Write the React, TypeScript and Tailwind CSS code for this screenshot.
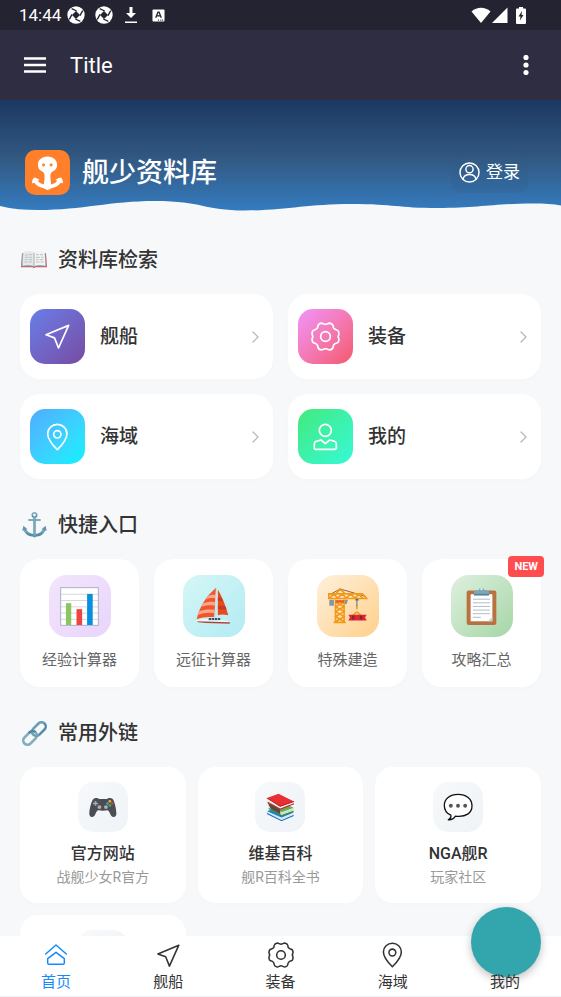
import type { ReactNode } from 'react';

type IconProps = { className?: string };

const line = {
  fill: 'none',
  stroke: 'currentColor',
  strokeLinecap: 'round' as const,
  strokeLinejoin: 'round' as const,
  'aria-hidden': true,
};

function PlaneIcon({ className }: IconProps) {
  return (
    <svg viewBox="0 0 80 80" strokeWidth="5" {...line} className={className}>
      <path d="M73 7 6 35l25 9 12 30Z" />
    </svg>
  );
}

function GearIcon({ className }: IconProps) {
  return (
    <svg viewBox="0 0 84 84" strokeWidth="5" {...line} className={className}>
      <path d="M42 7c-4 0-7-3-12-4-5 1-9 4-10 8 0 4-1 7-4 9-3 3-8 2-11 6-2 4-2 9-1 12 2 3 2 5 0 8-1 3-1 8 1 12 3 4 8 3 11 6 3 2 4 5 4 9 1 4 5 7 10 8 5-1 8-4 12-4s7 3 12 4c5-1 9-4 10-8 0-4 1-7 4-9 3-3 8-2 11-6 2-4 2-9 1-12-2-3-2-5 0-8 1-3 1-8-1-12-3-4-8-3-11-6-3-2-4-5-4-9-1-4-5-7-10-8-5 1-8 4-12 4Z" />
      <circle cx="42" cy="42" r="14" />
    </svg>
  );
}

function PinIcon({ className }: IconProps) {
  return (
    <svg viewBox="0 0 80 84" strokeWidth="5" {...line} className={className}>
      <path d="M40 80C29 69 11 49 11 32a29 28 0 0 1 58 0c0 17-18 37-29 48Z" />
      <circle cx="40" cy="34" r="11" />
    </svg>
  );
}

function PersonIcon({ className }: IconProps) {
  return (
    <svg viewBox="0 0 80 84" strokeWidth="5" {...line} className={className}>
      <circle cx="40" cy="22" r="18" />
      <path d="m27 51-15 4c-4 1-5 4-5 8v13c0 2 1 3 3 3h60c2 0 3-1 3-3V63c0-4-1-7-5-8l-15-4-13 11Z" />
    </svg>
  );
}

function HomeIcon({ className }: IconProps) {
  return (
    <svg viewBox="0 0 72 72" strokeWidth="4.5" {...line} className={className}>
      <path d="M5 33 36 6l31 27" />
      <path d="M36 28 11 47v13c0 3 1 4 4 4h42c3 0 4-1 4-4V47Z" />
    </svg>
  );
}

function UserCircleIcon({ className }: IconProps) {
  return (
    <svg viewBox="0 0 64 64" strokeWidth="4.5" {...line} className={className}>
      <circle cx="32" cy="32" r="29" />
      <circle cx="32" cy="22" r="11" />
      <path d="M12 52c3-11 11-14 20-14s17 3 20 14" />
    </svg>
  );
}

function ChevronIcon({ className }: IconProps) {
  return (
    <svg viewBox="0 0 8 14" strokeWidth="1.2" {...line} className={className}>
      <path d="m1 2 5 5-5 5" />
    </svg>
  );
}

function ApertureIcon() {
  return (
    <svg viewBox="0 0 54 54" className="size-[18px]" aria-hidden>
      <circle cx="27" cy="27" r="26" fill="#fff" />
      <path d="m27 15 12 12-12 12-12-12Z" fill="#242331" />
      <path d="M29 15 14 8M39 29l8-15M25 39l15 7M15 25 7 40" stroke="#242331" strokeWidth="4" />
    </svg>
  );
}

function BookEmoji() {
  return (
    <svg viewBox="0 0 78 52" className="w-[26px]" aria-hidden>
      <path d="M3 7h72l3 42H43l-4 3-4-3H0Z" fill="#c9555a" />
      <path d="M4 6h69l2 40H42l-3 2-3-2H2Z" fill="#8fb3c4" />
      <path d="M7 3c12-4 24-4 32 2v41c-9-5-22-5-34-2Z" fill="#e6e9ea" />
      <path d="M71 3C59-1 47-1 39 5v41c9-5 22-5 34-2Z" fill="#f2f3f3" />
      <path d="M39 5v41" stroke="#a4adb2" strokeWidth="3" />
      <path d="M12 12h8m3-1h10M11 19h12m2 0h8M11 26h8m3 0h11M10 33h11m3 0h9M45 11h9m3 0h9M45 19h12m3 0h7M45 26h8m3 0h11M45 33h11m3 0h9" stroke="#b9c0c3" strokeWidth="3" />
    </svg>
  );
}

function AnchorEmoji() {
  return (
    <svg viewBox="0 0 74 76" className="w-[25px]" aria-hidden>
      <defs>
        <linearGradient id="anchor-steel" x1="0" y1="0" x2="0" y2="1">
          <stop stopColor="#8fb2c0" />
          <stop offset="1" stopColor="#4c8ba8" />
        </linearGradient>
      </defs>
      <g fill="none" stroke="url(#anchor-steel)" strokeWidth="5">
        <circle cx="37" cy="9" r="6.5" />
        <path d="M7 47c3 14 14 22 30 22s27-8 30-22" strokeWidth="8" />
      </g>
      <path d="M21 24h32" stroke="#83aab8" strokeWidth="6" strokeLinecap="round" />
      <path d="M33 16h8v55h-8Z" fill="#7aa7b8" />
      <path d="M1 56 4 41l12 10ZM73 56 70 41 58 51ZM28 69l9 7 9-7Z" fill="#5f97af" />
    </svg>
  );
}

function LinkEmoji() {
  return (
    <svg viewBox="0 0 76 76" className="w-[25px]" aria-hidden>
      <g fill="none" strokeWidth="8" transform="rotate(-45 38 38)">
        <rect x="-5" y="25" width="48" height="26" rx="13" stroke="#82aebd" />
        <rect x="33" y="25" width="48" height="26" rx="13" stroke="#6d9fb3" />
        <path d="M26 25h5a12 12 0 0 1 12 12" stroke="#4d8ca3" />
        <path d="M45 51h23a13 13 0 0 0 13-13" stroke="#4b87a1" strokeWidth="4" />
      </g>
    </svg>
  );
}

function ChartEmoji() {
  return (
    <svg viewBox="0 0 118 118" className="w-[39px]" aria-hidden>
      <rect x="2" y="2" width="114" height="114" fill="#fff" stroke="#a9b0c3" strokeWidth="3" />
      <path d="M3 22h112M3 41h112M3 60h112M3 79h112M3 98h112" stroke="#bfc4cc" strokeWidth="2" />
      <path d="M18 49h16v66H18Z" fill="#8bc660" />
      <path d="M50 67h17v48H50Z" fill="#ee4540" />
      <path d="M82 21h17v94H82Z" fill="#078fe0" />
    </svg>
  );
}

function SailboatEmoji() {
  return (
    <svg viewBox="588 258 104 112" className="w-[35px]" aria-hidden>
      <path d="M648 260c-29 24-49 55-58 94 18-7 37-8 52-6Z" fill="#f2552c" />
      <path d="M625 284c8-3 15-3 22-2l-1 10c-10-2-20-1-29 3ZM608 307c13-5 26-6 37-4l-1 11c-14-3-28-1-41 3ZM596 331c16-6 32-7 47-5l-1 10c-16-3-32-1-48 5Z" fill="#f9a78b" />
      <path d="M653 266c12 20 22 44 31 76-12-3-22-3-31 0Z" fill="#e9491f" />
      <path d="m653 289 11 1 5 10-16-1ZM653 313l22 2 4 10-26-1Z" fill="#c53d1f" />
      <path d="m649 260-4 93" stroke="#d7dcde" strokeWidth="4" />
      <path d="M589 356c25-4 60-6 101 5l-5 6-88-4Z" fill="#f4f5f5" />
      <path d="m590 360 100 3-3 4c-32 0-64-1-92-4Z" fill="#a44c3b" />
      <path d="M625 347h31l7 11h-40Z" fill="#dbe3e6" />
      <path d="M626 353h34" stroke="#28566a" strokeWidth="6" strokeDasharray="7 2" />
    </svg>
  );
}

function CraneEmoji() {
  return (
    <svg viewBox="143 264 122 114" className="w-[40px]" aria-hidden>
      <path d="M147 303h14v18h-14ZM193 303h11l-4 13h-7Z" fill="#7d98a6" />
      <path d="m147 288 33-18 79 23" fill="none" stroke="#87664c" strokeWidth="3" />
      <g fill="none" stroke="#f19a19" strokeWidth="5">
        <path d="M145 285h103l13 14H145ZM167 285l13-15 15 15M148 298l12-13 13 13 13-13 13 13 13-13 13 13 13-13 10 13" />
        <path d="M166 302v70M192 302v70M166 310l26 14-26 15 26 15-26 16M192 310l-26 14 26 15-26 15 26 16M160 372h37" />
        <path d="M231 318v14m0 8-14 12m14-12 14 12" />
      </g>
      <path d="M166 304h26v8h-26Z" fill="#ef5b25" />
      <path d="M227 300h9v6h-9Z" fill="#606b70" />
      <path d="M231 305v17" stroke="#78909c" strokeWidth="4" />
      <path d="M205 349h56l-5 8 5 9h-56l5-9Z" fill="#dd2634" />
      <path d="M220 352v11m24-11v11" stroke="#8f2230" strokeWidth="7" />
    </svg>
  );
}

function ClipboardEmoji() {
  return (
    <svg viewBox="556 256 94 120" className="w-[31px]" aria-hidden>
      <rect x="558" y="270" width="90" height="104" rx="6" fill="#ba7140" />
      <path d="M570 281h66v82h-66Z" fill="#fff" />
      <path d="M623 363h13v-13Z" fill="#c7ced3" />
      <path d="M577 296h52M577 307h52M577 318h52M577 329h52M577 340h52M577 351h24" stroke="#b2bcc4" strokeWidth="3" />
      <path d="M580 282v-6c0-5 4-7 10-7h5a8 8 0 1 1 16 0h5c6 0 10 2 10 7v6Z" fill="#78a8b9" />
      <circle cx="603" cy="265" r="4" fill="#d8eef0" />
      <path d="M580 280h46v5h-46Z" fill="#50849b" />
    </svg>
  );
}

function GamepadEmoji() {
  return (
    <svg viewBox="264 260 86 64" className="w-[28px]" aria-hidden>
      <path d="M278 265c8-4 15 0 17 1h24c2-1 9-5 17-1 6 5 13 34 12 49-3 11-14 9-18 0-3-7-5-11-9-13-8 2-20 2-29 0-4 2-6 6-9 13-4 9-15 11-18 0-1-15 7-44 13-49Z" fill="#4b4d54" />
      <path d="M284 272v15m-8-7h16" stroke="#a6a8aa" strokeWidth="5" />
      <circle cx="296" cy="291" r="6" fill="#aeb0b2" />
      <circle cx="316" cy="291" r="6" fill="#aeb0b2" />
      <circle cx="328" cy="273" r="4" fill="#f5bd22" />
      <circle cx="321" cy="280" r="4" fill="#42a7de" />
      <circle cx="335" cy="280" r="4" fill="#ed3e39" />
      <circle cx="328" cy="286" r="4" fill="#46b267" />
    </svg>
  );
}

function BooksEmoji() {
  return (
    <svg viewBox="0 0 86 84" className="w-[29px]" aria-hidden>
      <path d="m3 54 37-14 42 18-36 21Z" fill="#1683ce" />
      <path d="m3 54 43 19 36-15v9L46 83 3 62Z" fill="#d6e9f4" />
      <path d="m3 61 43 21 36-15" fill="none" stroke="#166fb9" strokeWidth="3" />
      <path d="m8 35 34-9 40 18-35 18Z" fill="#66a957" />
      <path d="m8 36 39 20 35-12v9L47 67 8 47Z" fill="#d5e3c3" />
      <path d="m8 46 39 21 35-13" fill="none" stroke="#458846" strokeWidth="3" />
      <path d="m4 28 38 21v14L15 48Z" fill="#5a4b3c" />
      <path d="m3 15 34-13 46 23-41 17Z" fill="#e82f31" />
      <path d="M3 15c-4 5-2 9 2 11l37 21 41-17v-5L42 41Z" fill="#f0f0ec" />
      <path d="m3 15 39 24 41-14M5 27l37 21 41-16" fill="none" stroke="#bd2429" strokeWidth="3" />
    </svg>
  );
}

function BubbleEmoji() {
  return (
    <svg viewBox="488 248 92 88" className="w-[30px]" aria-hidden>
      <path d="M534 252c-25 0-42 14-42 34 0 14 7 24 20 30 2 6-1 10-8 14 10 1 17-3 22-11 33 4 51-10 51-32 0-21-18-35-43-35Z" fill="#fff" stroke="#111" strokeWidth="4" strokeLinejoin="round" />
      <g fill="#555">
        <circle cx="512" cy="287" r="6" />
        <circle cx="534" cy="287" r="6" />
        <circle cx="556" cy="287" r="6" />
      </g>
    </svg>
  );
}

function StatusBar() {
  return (
    <div className="flex h-[30px] shrink-0 items-center bg-[#242331] pr-[35px] pl-[19px] text-white">
      <span className="w-12 text-[17px] leading-5">14:44</span>
      <div className="flex items-center gap-[10px]">
        <ApertureIcon />
        <ApertureIcon />
        <svg viewBox="0 0 14 18" className="ml-[1px] w-[14px]" aria-hidden>
          <path d="M5.500 1h3v6H12l-5 5-5-5h3.500ZM1 15.500h12V17H1Z" fill="#fff" />
        </svg>
        <svg viewBox="0 0 14 14" className="ml-1 w-[13px]" aria-hidden>
          <rect x="0.500" y="0.500" width="13" height="13" rx="1" fill="#fff" />
          <path d="m4 9.500 2.400-6h1.200l2.400 6M5 7.500h4M6.500 12h1m1.500 0h1m1 0h1" stroke="#242331" strokeWidth="1.400" fill="none" />
        </svg>
      </div>
      <div className="ml-auto flex items-center">
        <svg viewBox="0 0 20 16" className="w-5" aria-hidden>
          <path d="M0.500 4.500C6-.5 14-.5 19.500 4.500L10 16Z" fill="#fff" />
        </svg>
        <svg viewBox="0 0 16 16" className="ml-[1px] w-4" aria-hidden>
          <path d="M15.500.5V16H0Z" fill="#fff" />
        </svg>
        <svg viewBox="0 0 10 17" className="ml-2 w-[10px]" aria-hidden>
          <path d="M3 0h4v1.500h2q1 0 1 1V16q0 1-1 1H1q-1 0-1-1V2.500q0-1 1-1h2Z" fill="#fff" />
          <path d="M6 4 2.500 9.500h2L4 13.500 7.500 8h-2Z" fill="#242331" />
        </svg>
      </div>
    </div>
  );
}

function AppBar() {
  return (
    <header className="flex h-[70px] shrink-0 items-center bg-[#2e2d42] px-5 text-white">
      <button type="button" aria-label="菜单" className="flex size-[30px] items-center justify-center">
        <svg viewBox="0 0 22 16" className="w-[22px]" aria-hidden>
          <path d="M0 1.500h22M0 8h22M0 14.500h22" stroke="#fff" strokeWidth="2.400" />
        </svg>
      </button>
      <h1 className="ml-5 pt-[2px] text-[22px] leading-7">Title</h1>
      <button type="button" aria-label="更多" className="ml-auto flex size-[30px] items-center justify-center">
        <svg viewBox="0 0 6 20" className="h-5" aria-hidden>
          <g fill="#fff">
            <circle cx="3" cy="2.500" r="2.600" />
            <circle cx="3" cy="10" r="2.600" />
            <circle cx="3" cy="17.500" r="2.600" />
          </g>
        </svg>
      </button>
    </header>
  );
}

function Hero() {
  return (
    <div className="relative h-[114px] bg-linear-to-b from-[#1c3862] via-[#315881] to-[#347ec4]">
      <div className="flex items-center px-[25px] pt-[50px]">
        <svg viewBox="0 0 136 136" className="size-[45px]" aria-hidden>
          <rect width="136" height="136" rx="32" fill="#ff7f2a" />
          <path d="M68 20c-18 0-29 11-29 25 0 9 5 16 12 19 7 4 9 9 8 21l-2 19c-9-2-15-6-18-11l5-2c-6-5-11-8-17-8-5 6-6 11-5 18l6-2c7 10 16 14 24 15 6 1 10 6 16 7 6-1 10-6 16-7 8-1 17-5 24-15l6 2c1-7 0-12-5-18-6 0-11 3-17 8l5 2c-3 5-9 9-18 11l-2-19c-1-12 1-17 8-21 7-3 12-10 12-19 0-14-11-25-29-25Z" fill="#fff" />
          <circle cx="56" cy="45" r="4.500" fill="#ff7f2a" />
          <circle cx="79" cy="45" r="4.500" fill="#ff7f2a" />
        </svg>
        <span className="ml-3 text-[27px] leading-10 font-medium text-white">舰少资料库</span>
        <a href="#login" className="mr-2 ml-auto flex h-10 items-center gap-[6px] rounded-[10px] bg-[#315881]/20 px-2 text-[17px] text-white">
          <UserCircleIcon className="size-[21px]" />
          登录
        </a>
      </div>
      <svg viewBox="0 0 561 16" preserveAspectRatio="none" className="absolute inset-x-0 bottom-0 h-4 w-full" aria-hidden>
        <path d="M0 8c12 3 25 4 38 4 45 0 72-9 117-9 48 0 48 9.500 90 9.500 40 0 62-6.500 106-6.500 45 0 45 4 87 4s57-4.500 95-4.500c12 0 20 .5 28 2V16H0Z" fill="#f7f8fa" />
      </svg>
    </div>
  );
}

function Section({ icon, title, children }: { icon: ReactNode; title: string; children: ReactNode }) {
  return (
    <section className="pt-8 not-first:pt-[30px]">
      <h2 className="mb-[18px] flex h-8 items-center text-[20px] leading-8 font-medium text-[#333] first:mt-0">
        <span className="mr-[11px] flex w-[27px] justify-end">{icon}</span>
        {title}
      </h2>
      {children}
    </section>
  );
}

const categories = [
  { label: '舰船', tile: 'bg-linear-135 from-[#667eea] to-[#764ba2]', icon: <PlaneIcon className="size-[27px]" /> },
  { label: '装备', tile: 'bg-linear-135 from-[#f093fb] to-[#f5576c]', icon: <GearIcon className="size-[29px]" /> },
  { label: '海域', tile: 'bg-linear-135 from-[#4facfe] to-[#00f2fe]', icon: <PinIcon className="h-7" /> },
  { label: '我的', tile: 'bg-linear-135 from-[#43e97b] to-[#38f9d7]', icon: <PersonIcon className="h-7" /> },
];

const shortcuts = [
  { label: '经验计算器', tile: 'bg-linear-135 from-[#f3e5fb] to-[#e8d5fc]', icon: <ChartEmoji />, isNew: false },
  { label: '远征计算器', tile: 'bg-linear-135 from-[#d5f7f7] to-[#b2ebf2]', icon: <SailboatEmoji />, isNew: false },
  { label: '特殊建造', tile: 'bg-linear-135 from-[#fff0dc] to-[#ffd08a]', icon: <CraneEmoji />, isNew: false },
  { label: '攻略汇总', tile: 'bg-linear-135 from-[#dff0df] to-[#a5d6a7]', icon: <ClipboardEmoji />, isNew: true },
];

const links = [
  { title: '官方网站', note: '战舰少女R官方', icon: <GamepadEmoji /> },
  { title: '维基百科', note: '舰R百科全书', icon: <BooksEmoji /> },
  { title: 'NGA舰R', note: '玩家社区', icon: <BubbleEmoji /> },
];

const tabs = [
  { label: '首页', icon: <HomeIcon className="size-6" />, active: true },
  { label: '舰船', icon: <PlaneIcon className="size-[25px]" />, active: false },
  { label: '装备', icon: <GearIcon className="size-[26px]" />, active: false },
  { label: '海域', icon: <PinIcon className="h-[26px]" />, active: false },
  { label: '我的', icon: <PersonIcon className="h-[26px]" />, active: false },
];

const card = 'bg-white shadow-[0_2px_10px_rgba(0,0,0,0.01)]';
const linkTile = 'flex size-[50px] items-center justify-center rounded-[15px] bg-linear-135 from-[#f7f9fb] to-[#eff3f7]';

export default function App() {
  return (
    <div className="flex h-screen flex-col overflow-hidden bg-[#f7f8fa] font-[Roboto,'Noto_Sans_CJK_SC',sans-serif] text-[#333]">
      <StatusBar />
      <AppBar />
      <main className="min-h-0 flex-1 overflow-y-auto [scrollbar-width:none]">
        <Hero />
        <div className="-mt-[2px] px-5 pb-8">
          <Section icon={<BookEmoji />} title="资料库检索">
            <div className="grid grid-cols-2 gap-[15px]">
              {categories.map((c) => (
                <a key={c.label} href="#category" className={`flex items-center rounded-[20px] px-[10px] py-[15px] ${card}`}>
                  <span className={`flex size-[55px] items-center justify-center rounded-[15px] text-white ${c.tile}`}>{c.icon}</span>
                  <span className="ml-[15px] text-[19px] leading-7 font-medium">{c.label}</span>
                  <ChevronIcon className="mr-[3px] ml-auto w-2 text-[#b5b5b5]" />
                </a>
              ))}
            </div>
          </Section>
          <Section icon={<AnchorEmoji />} title="快捷入口">
            <div className="grid grid-cols-4 gap-[15px]">
              {shortcuts.map((s) => (
                <a key={s.label} href="#shortcut" className={`relative flex flex-col items-center rounded-[20px] pt-4 pb-[15px] ${card}`}>
                  <span className={`flex size-[62px] items-center justify-center rounded-[18px] ${s.tile}`}>{s.icon}</span>
                  <span className="mt-3 text-[15px] leading-[23px] whitespace-nowrap text-[#666]">{s.label}</span>
                  {s.isNew && (
                    <span className="absolute -top-[3px] -right-[3px] rounded-[4px] bg-[#ff4d4f] px-[6px] text-[11px] leading-[21px] font-bold text-white">
                      NEW
                    </span>
                  )}
                </a>
              ))}
            </div>
          </Section>
          <Section icon={<LinkEmoji />} title="常用外链">
            <div className="grid grid-cols-3 gap-3">
              {links.map((l) => (
                <a key={l.title} href="#link" className={`flex flex-col items-center rounded-[18px] py-[15px] ${card}`}>
                  <span className={linkTile}>{l.icon}</span>
                  <span className="mt-[10px] text-[16px] leading-6 font-medium">{l.title}</span>
                  <span className="mt-[1px] text-[14px] leading-[21px] text-[#999]">{l.note}</span>
                </a>
              ))}
              <div className={`flex h-[136px] flex-col items-center rounded-[18px] py-[15px] ${card}`}>
                <span className={linkTile} />
              </div>
            </div>
          </Section>
        </div>
      </main>
      <nav className="absolute inset-x-0 bottom-0 flex h-[61px] border-b border-[#eef0f1] bg-white">
        {tabs.map((t) => (
          <a key={t.label} href="#tab" className={`flex flex-1 flex-col items-center pt-[6px] ${t.active ? 'text-[#1989fa]' : 'text-[#333]'}`}>
            <span className="flex h-[26px] items-center">{t.icon}</span>
            <span className="relative z-20 mt-[2px] text-[15px] leading-6">{t.label}</span>
          </a>
        ))}
      </nav>
      <button type="button" aria-label="悬浮按钮" className="absolute right-5 bottom-5 z-10 size-[70px] rounded-full bg-[#33a5ad] shadow-[0_3px_8px_rgba(0,0,0,0.25)]" />
    </div>
  );
}
